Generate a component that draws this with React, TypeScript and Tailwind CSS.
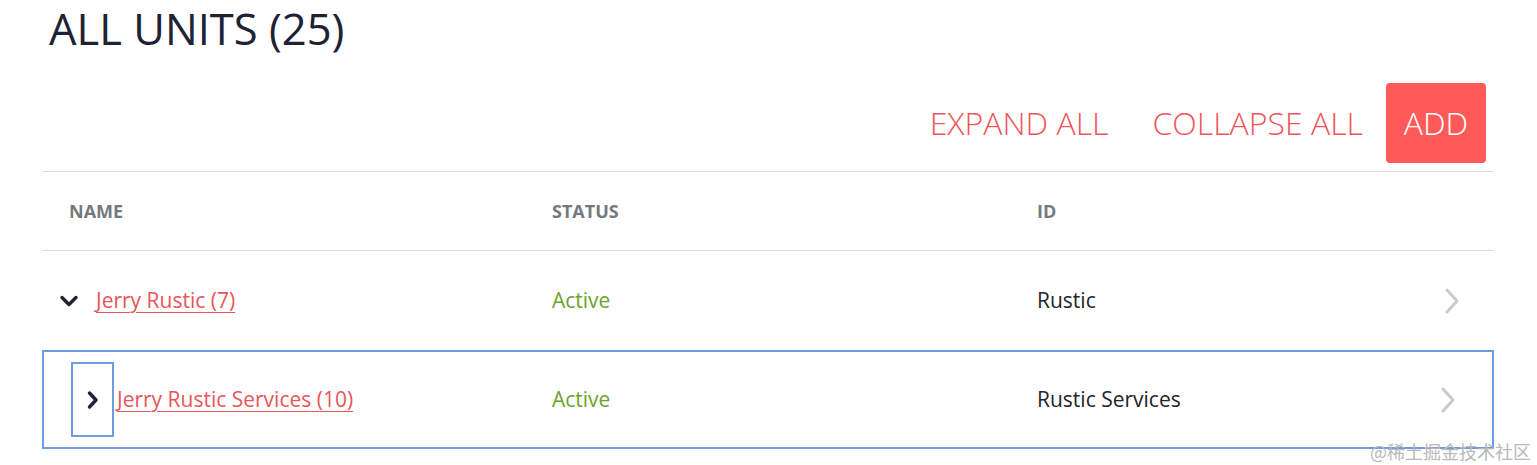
import React from 'react';

type Unit = {
  name: string;
  count: number;
  status: string;
  id: string;
  expanded: boolean;
  focused?: boolean;
};

const UNITS: Unit[] = [
  { name: 'Jerry Rustic', count: 7, status: 'Active', id: 'Rustic', expanded: true },
  { name: 'Jerry Rustic Services', count: 10, status: 'Active', id: 'Rustic Services', expanded: false, focused: true },
];

function ChevronDown() {
  return (
    <svg width="20" height="14" viewBox="0 0 20 14" aria-hidden>
      <path d="M3 3.5l7 7 7-7" fill="none" stroke="#1e2235" strokeWidth="3.4" strokeLinecap="round" strokeLinejoin="round" />
    </svg>
  );
}

function ChevronRightBold() {
  return (
    <svg width="14" height="20" viewBox="0 0 14 20" aria-hidden>
      <path d="M3.5 3l6.5 7-6.5 7" fill="none" stroke="#1e2235" strokeWidth="3.4" strokeLinecap="round" strokeLinejoin="round" />
    </svg>
  );
}

function ChevronRightLight() {
  return (
    <svg width="16" height="26" viewBox="0 0 16 26" aria-hidden>
      <path d="M3 2l10 11-10 11" fill="none" stroke="#cbcbcb" strokeWidth="3" strokeLinecap="round" strokeLinejoin="round" />
    </svg>
  );
}

export default function App() {
  return (
    <div className="relative h-[465px] w-[1537px] overflow-hidden bg-white font-['Open_Sans',sans-serif]">
      <div className="ml-[42px] w-[1452px]">
        <h1 className="ml-[7px] pt-[2px] text-[43.5px] leading-[54px] font-normal text-[#1e2235]">ALL UNITS (25)</h1>

        <div className="mt-[27px] flex items-center justify-end pr-[8px]">
          <button type="button" className="text-[32px] font-light text-[#f0555a]">EXPAND ALL</button>
          <button type="button" className="ml-[44px] text-[32px] font-light text-[#f0555a]">COLLAPSE ALL</button>
          <button type="button" className="ml-[23px] flex h-[80px] w-[100px] items-center justify-center rounded-[4px] bg-[#ff5a5a] text-[32px] font-light text-white">ADD</button>
        </div>

        <div className="mt-[8px] border-t border-[#dddddd]">
          <div className="grid h-[79px] grid-cols-[510px_485px_1fr_60px] items-center border-b border-[#dddddd] text-[18px] font-bold text-[#75797e]">
            <span className="pl-[27px]">NAME</span>
            <span>STATUS</span>
            <span>ID</span>
            <span />
          </div>

          {UNITS.map((u) => (
            <div
              key={u.name}
              className={`grid h-[99px] grid-cols-[510px_485px_1fr_60px] items-center text-[21px] ${
                u.focused ? 'w-[1452px] border-2 border-[#6f9be0]' : ''
              }`}
            >
              <div className="flex items-center">
                {u.expanded ? (
                  <span className="ml-[17px] mr-[17px] flex w-[20px] justify-center">
                    <ChevronDown />
                  </span>
                ) : (
                  <span className="ml-[27px] mr-[3px] flex h-[75px] w-[43px] items-center justify-center border-2 border-[#6f9be0]">
                    <ChevronRightBold />
                  </span>
                )}
                <a href="#" className="text-[#e8555a] underline decoration-1 underline-offset-[4px]">
                  {u.name} ({u.count})
                </a>
              </div>
              <span className={`text-[#6aa42a] ${u.focused ? '-ml-[2px]' : ''}`}>{u.status}</span>
              <span className={`text-[#222428] ${u.focused ? '-ml-[2px]' : ''}`}>{u.id}</span>
              <span className={`flex justify-start ${u.focused ? 'pl-[8px]' : 'pl-[10px]'}`}>
                <ChevronRightLight />
              </span>
            </div>
          ))}
        </div>
      </div>

      <span className="absolute bottom-[3px] right-[6px] font-['Noto_Sans_CJK_SC',sans-serif] text-[18px] leading-[22px] text-[#b8b8b8]">
        @稀土掘金技术社区
      </span>
    </div>
  );
}
